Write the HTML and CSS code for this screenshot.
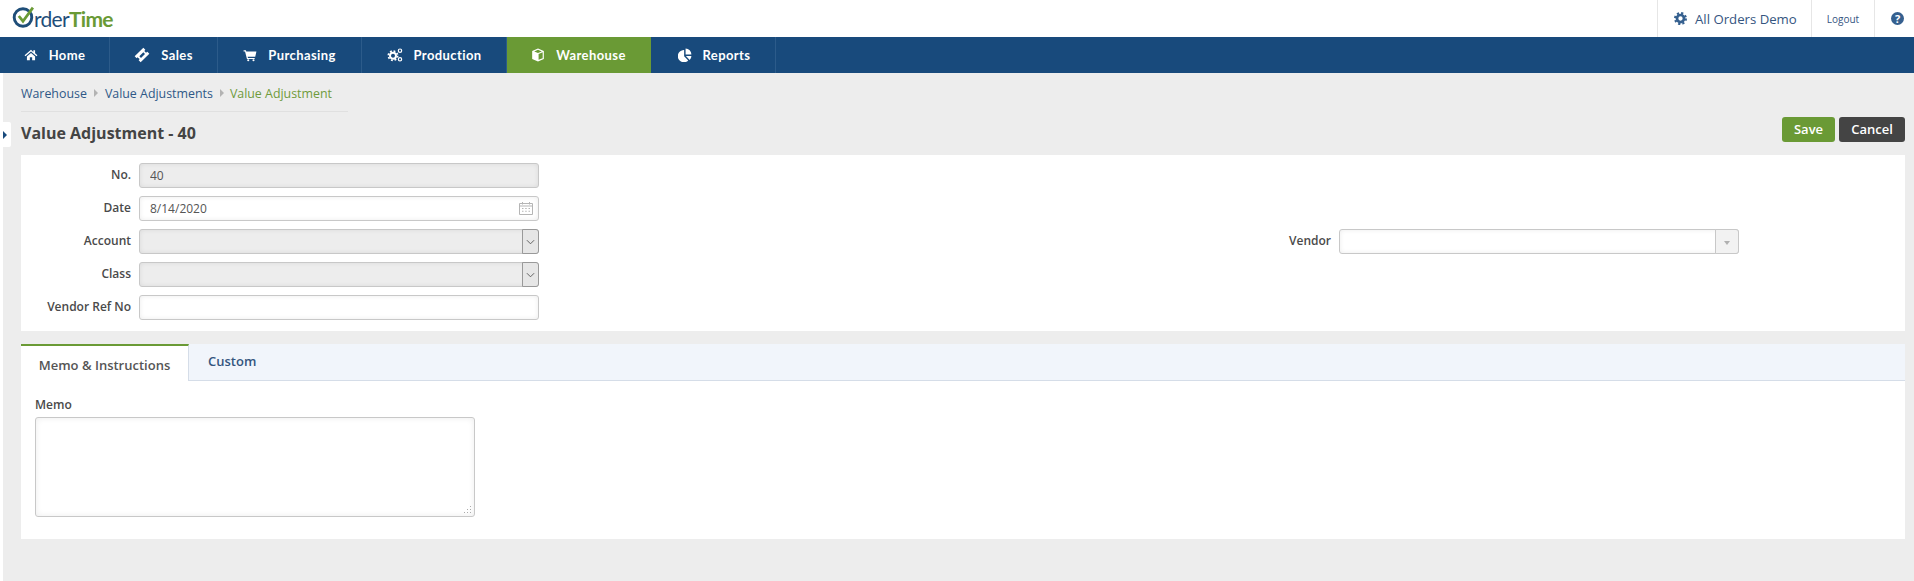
FILE: index.html
```html
<!DOCTYPE html>
<html lang="en">
<head>
    <meta charset="UTF-8">
    <title>Value Adjustment - 40</title>
    <link rel="stylesheet" href="styles.css">
</head>
<body>
    <header class="top-bar">
        <div class="logo">
            <svg class="logo-o" viewBox="0 0 22 22">
                <circle cx="10.5" cy="12" r="8.4" fill="none" stroke="#1f4e79" stroke-width="2.8"/>
                <path d="M6.5 10.5l4 5L20 2.5" fill="none" stroke="#6a9a35" stroke-width="2.6"/>
            </svg>
            <span class="logo-order">rder</span><span class="logo-time">Time</span>
        </div>
        <div class="top-links">
            <a class="top-link top-link-user">
                <svg class="icon-gear" viewBox="0 0 24 24">
                    <circle cx="12" cy="12" r="6.5" fill="none" stroke="#35608f" stroke-width="5"/>
                    <circle cx="12" cy="12" r="10" fill="none" stroke="#35608f" stroke-width="4" stroke-dasharray="4 3.85"/>
                </svg>
                All Orders Demo
            </a>
            <a class="top-link top-link-logout">Logout</a>
            <a class="top-link top-link-help"><span class="help-icon">?</span></a>
        </div>
    </header>

    <nav class="main-nav">
        <a class="nav-item nav-home">
            <svg class="nav-icon" viewBox="0 0 24 24"><path d="M12 3L1 12.5l1.5 1.6L12 6l9.5 8.1 1.5-1.6-4-3.4V4h-3v3zM5 14.5V21h5v-5h4v5h5v-6.5l-7-6z"/></svg>
            Home
        </a>
        <a class="nav-item nav-sales">
            <svg class="nav-icon nav-icon-wide" viewBox="0 0 24 24"><path d="M1 14L14 1l3 3-1.500 2 2.500 2.500 2-1.500 3 3-13 13-3-3 1.500-2L5 15.500l-1 1.500zM8 14l2.500 2.500 6-6L14 8z" fill-rule="evenodd"/></svg>
            Sales
        </a>
        <a class="nav-item nav-purchasing">
            <svg class="nav-icon" viewBox="0 0 24 24"><path d="M1 4h4l.6 2H23l-2 9H8l.5 2H20v2H6.800L3.500 6H1z"/><circle cx="9" cy="21" r="1.800"/><circle cx="18" cy="21" r="1.800"/></svg>
            Purchasing
        </a>
        <a class="nav-item nav-production">
            <svg class="nav-icon nav-icon-wide" viewBox="0 0 24 24">
                <g fill="none" stroke="#fff">
                    <circle cx="9" cy="13" r="4.500" stroke-width="3"/>
                    <circle cx="9" cy="13" r="7" stroke-width="2.500" stroke-dasharray="2.800 2.700"/>
                    <circle cx="19.500" cy="5.500" r="2.500" stroke-width="1.800"/>
                    <circle cx="19.500" cy="18.500" r="2.500" stroke-width="1.800"/>
                </g>
            </svg>
            Production
        </a>
        <a class="nav-item nav-warehouse active">
            <svg class="nav-icon" viewBox="0 0 24 24"><path d="M12 1l10 4v14l-10 4-10-4V5zM12 3.200L5.500 5.800 12 8.400l6.500-2.600zM13 10.200v10l7-2.800V7.400z" fill-rule="evenodd"/></svg>
            Warehouse
        </a>
        <a class="nav-item nav-reports">
            <svg class="nav-icon" viewBox="0 0 24 24"><path d="M10.500 3.500v10.500l7 7.500A10.500 10.500 0 1 1 10.500 3.500zM13 1a10 10 0 0 1 10 10H13zM13.500 13.500H23a10 10 0 0 1-3 7z"/></svg>
            Reports
        </a>
    </nav>

    <div class="page">
        <div class="side-strip"><span class="side-toggle"></span></div>
        <main class="content">
            <div class="breadcrumb">
                <a>Warehouse</a><span class="crumb-sep"></span><a>Value Adjustments</a><span class="crumb-sep"></span><span class="crumb-current">Value Adjustment</span>
            </div>

            <div class="page-header">
                <h1>Value Adjustment - 40</h1>
                <div class="page-actions">
                    <button type="button" class="btn btn-save">Save</button>
                    <button type="button" class="btn btn-cancel">Cancel</button>
                </div>
            </div>

            <section class="card form-grid">
                <label class="field-label">No.</label>
                <input class="field field-disabled field-no" type="text" value="40" readonly>

                <label class="field-label">Date</label>
                <div class="field-wrap">
                    <input class="field" type="text" value="8/14/2020">
                    <svg class="calendar-icon" viewBox="0 0 14 14">
                        <path d="M.5 2.500h13v11H.5zM.5 5h13M3.500 1v2.500M10.500 1v2.500" fill="none" stroke="#b5b5b5"/>
                        <path d="M3 7h1.500v1H3zM6.200 7h1.500v1H6.200zM9.500 7H11v1H9.500zM3 9.800h1.500v1H3zM6.200 9.800h1.500v1H6.200zM9.500 9.800H11v1H9.500z" fill="#b5b5b5"/>
                    </svg>
                </div>

                <label class="field-label">Account</label>
                <div class="field-wrap">
                    <div class="field field-disabled"></div>
                    <span class="select-btn"><svg viewBox="0 0 10 6"><path d="M1 1l4 4 4-4" fill="none" stroke="#555"/></svg></span>
                </div>
                <label class="field-label vendor-label">Vendor</label>
                <div class="field-wrap vendor-field">
                    <div class="field"></div>
                    <span class="combo-btn"></span>
                </div>

                <label class="field-label">Class</label>
                <div class="field-wrap">
                    <div class="field field-disabled"></div>
                    <span class="select-btn"><svg viewBox="0 0 10 6"><path d="M1 1l4 4 4-4" fill="none" stroke="#555"/></svg></span>
                </div>

                <label class="field-label">Vendor Ref No</label>
                <input class="field" type="text">
            </section>

            <section class="tabs-card">
                <div class="tabs">
                    <a class="tab active">Memo &amp; Instructions</a>
                    <a class="tab">Custom</a>
                </div>
                <div class="tab-body">
                    <label class="memo-label" for="memo">Memo</label>
                    <div class="memo-wrap">
                        <textarea id="memo" class="memo"></textarea>
                        <svg class="memo-grip" viewBox="0 0 8 8" fill="#aaa">
                            <rect x="6" y="0" width="1" height="1"/>
                            <rect x="3" y="3" width="1" height="1"/><rect x="6" y="3" width="1" height="1"/>
                            <rect x="0" y="6" width="1" height="1"/><rect x="3" y="6" width="1" height="1"/><rect x="6" y="6" width="1" height="1"/>
                        </svg>
                    </div>
                </div>
            </section>
        </main>
    </div>
</body>
</html>
```

FILE: styles.css
```css
* {
    box-sizing: border-box;
}

html, body {
    height: 100%;
}

body {
    margin: 0;
    font-family: "Open Sans", Arial, sans-serif;
    font-size: 12px;
    color: #444;
    background-color: #ededed;
    display: flex;
    flex-direction: column;
    overflow: hidden;
}

/* top bar */
.top-bar {
    height: 37px;
    background-color: #fff;
    display: flex;
    justify-content: space-between;
}

.logo {
    display: flex;
    align-items: center;
    padding: 0 0 1px 12px;
    font-family: Lato, Arial, sans-serif;
    font-size: 21px;
    line-height: 1;
    letter-spacing: -0.7px;
}

.logo-o {
    width: 23px;
    height: 23px;
    margin-right: -1px;
    margin-top: -3px;
}

.logo-order {
    color: #1f4e79;
}

.logo-time {
    color: #6a9a35;
    font-weight: 700;
}

.top-links {
    display: flex;
}

.top-link {
    display: flex;
    align-items: center;
    border-left: 1px solid #e6e6e6;
    color: #35557f;
}

.top-link-user {
    width: 154px;
    padding-left: 16px;
    font-size: 13.200px;
}

.icon-gear {
    width: 13px;
    height: 13px;
    margin-right: 8px;
}

.top-link-logout {
    width: 63px;
    justify-content: center;
    font-size: 10px;
}

.top-link-help {
    width: 40px;
    justify-content: center;
    padding-left: 6px;
}

.help-icon {
    width: 13px;
    height: 13px;
    border-radius: 50%;
    background-color: #35608f;
    color: #fff;
    font-size: 11px;
    font-weight: 700;
    line-height: 13px;
    text-align: center;
}

/* main nav */
.main-nav {
    height: 36px;
    background-color: #184a7c;
    display: flex;
}

.nav-item {
    display: flex;
    align-items: center;
    justify-content: center;
    border-right: 1px solid #2c5b8a;
    color: #fff;
    font-family: Lato, Arial, sans-serif;
    font-size: 13px;
    font-weight: 700;
    letter-spacing: 0.4px;
}

.nav-item.active {
    background-color: #6a9a35;
    border-right-color: #6a9a35;
}

.nav-home { width: 110px; }
.nav-sales { width: 108px; }
.nav-purchasing { width: 144px; }
.nav-production { width: 145px; }
.nav-warehouse { width: 144px; }
.nav-reports { width: 125px; padding-left: 2px; }

.nav-icon {
    width: 14px;
    height: 14px;
    margin-right: 11px;
    fill: #fff;
}

.nav-icon-wide {
    width: 16px;
    height: 16px;
}

/* page */
.page {
    flex: 1;
    display: flex;
    min-height: 0;
    position: relative;
}

.side-strip {
    width: 3px;
    background-color: #fff;
}

.side-toggle {
    position: absolute;
    left: 0;
    top: 49px;
    width: 11px;
    height: 25px;
    background-color: #fff;
    border-radius: 0 2px 2px 0;
}

.side-toggle::after {
    content: "";
    position: absolute;
    left: 3px;
    top: 9px;
    border-left: 4px solid #184a7c;
    border-top: 4px solid transparent;
    border-bottom: 4px solid transparent;
}

.content {
    flex: 1;
    padding: 0 9px 0 18px;
    min-width: 0;
}

.breadcrumb {
    width: 327px;
    height: 39px;
    padding-top: 2px;
    border-bottom: 1px solid #e0e0e0;
    display: flex;
    align-items: center;
    font-size: 12.400px;
    color: #2f5887;
    white-space: nowrap;
}

.crumb-sep {
    margin: 0 7px 0 7px;
    border-left: 4px solid #b3b3b3;
    border-top: 4px solid transparent;
    border-bottom: 4px solid transparent;
}

.crumb-sep:nth-of-type(2) {
    margin-right: 6px;
}

.crumb-current {
    color: #6f9b3c;
}

.page-header {
    height: 43px;
    display: flex;
    justify-content: space-between;
    align-items: flex-start;
    padding-top: 5px;
}

.page-header h1 {
    margin: 0;
    font-size: 16px;
    font-weight: 700;
    line-height: 32px;
    color: #444;
}

.page-actions {
    display: flex;
    gap: 4px;
}

.btn {
    height: 25px;
    padding: 0 0 2px;
    border: none;
    border-radius: 3px;
    color: #fff;
    font-family: inherit;
    font-size: 13px;
    font-weight: 600;
}

.btn-save {
    width: 53px;
    background-color: #6a9a35;
}

.btn-cancel {
    width: 66px;
    background-color: #444;
}

/* form card */
.card {
    height: 176px;
    background-color: #fff;
}

.form-grid {
    display: grid;
    grid-template-columns: 110px 400px 784px 400px;
    grid-auto-rows: 25px;
    column-gap: 8px;
    row-gap: 8px;
    padding-top: 8px;
}

.field-label {
    grid-column: 1;
    align-self: center;
    justify-self: end;
    padding-bottom: 2px;
    font-weight: 600;
    color: #4a4a4a;
    white-space: nowrap;
}

.field {
    grid-column: 2;
    display: block;
    width: 100%;
    height: 25px;
    padding: 0 10px;
    border: 1px solid #c8c8c8;
    border-radius: 3px;
    background-color: #fff;
    box-shadow: inset 0 0 5px rgba(0, 0, 0, 0.08);
    font-family: inherit;
    font-size: 12px;
    color: #555;
    outline: none;
}

.field-disabled {
    background-color: #ededed;
}

.field-wrap {
    grid-column: 2;
    position: relative;
}

.field-label.vendor-label {
    grid-column: 3;
    grid-row: 3;
}

.field-wrap.vendor-field {
    grid-column: 4;
    grid-row: 3;
}

.calendar-icon {
    position: absolute;
    right: 6px;
    top: 5px;
    width: 14px;
    height: 14px;
}

.select-btn {
    position: absolute;
    right: 0;
    top: 0;
    width: 17px;
    height: 25px;
    display: flex;
    align-items: center;
    justify-content: center;
    border: 1px solid #999;
    border-radius: 0 3px 3px 0;
    background-color: #e6e6e6;
}

.select-btn svg {
    width: 9px;
    height: 6px;
}

.combo-btn {
    position: absolute;
    right: 0;
    top: 0;
    width: 24px;
    height: 25px;
    border: 1px solid #c8c8c8;
    border-radius: 0 3px 3px 0;
    background-color: #f2f2f2;
}

.combo-btn::after {
    content: "";
    position: absolute;
    left: 8px;
    top: 11px;
    border-top: 4px solid #b0b0b0;
    border-left: 3.500px solid transparent;
    border-right: 3.500px solid transparent;
}

/* tabs */
.tabs-card {
    margin-top: 13px;
    height: 195px;
    background-color: #fff;
}

.tabs {
    height: 37px;
    display: flex;
    background-color: #f1f5fb;
    border-bottom: 1px solid #d5dde8;
}

.tab {
    padding: 0 19px 2px;
    display: flex;
    align-items: center;
    font-size: 13px;
    font-weight: 600;
    color: #35557f;
}

.tab.active {
    width: 168px;
    height: 37px;
    padding: 2px 0 0;
    justify-content: center;
    background-color: #fff;
    border-top: 2px solid #6a9a35;
    border-right: 1px solid #d5dde8;
    color: #555;
}

.tab-body {
    padding: 15px 14px;
}

.memo-label {
    display: block;
    height: 21px;
    font-weight: 600;
    color: #4a4a4a;
}

.memo-wrap {
    position: relative;
    width: 440px;
}

.memo {
    display: block;
    width: 440px;
    height: 100px;
    border: 1px solid #c8c8c8;
    border-radius: 3px;
    box-shadow: inset 0 0 6px rgba(0, 0, 0, 0.08);
    outline: none;
    resize: none;
}

.memo-grip {
    position: absolute;
    right: 3px;
    bottom: 3px;
    width: 8px;
    height: 8px;
}
```
